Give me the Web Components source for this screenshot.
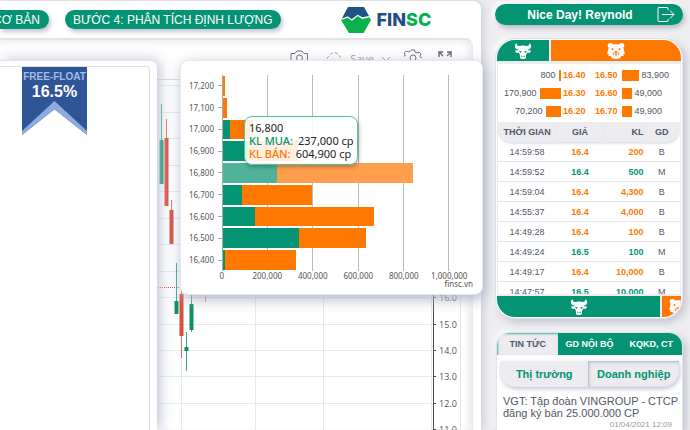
<!DOCTYPE html>
<html lang="vi">
<head>
<meta charset="utf-8">
<meta name="viewport" content="width=device-width, initial-scale=1">
<title>FINSC</title>
<style>
html, body { height: 100%; }
body {
  margin: 0; overflow: hidden; background: #eeeef0; color: #525866;
  font-family: "Liberation Sans", Arial, sans-serif; font-size: 10px;
  --green: #059473; --orange: #ff7800; --navy: #2f5597;
}
</style>
</head>
<body>
<fin-app></fin-app>
<script>
const define = (name, html, setup) => customElements.define(name, class extends HTMLElement {
  constructor() {
    super();
    const t = document.createElement('template');
    t.innerHTML = html;
    this.attachShadow({ mode: 'open' }).append(t.content.cloneNode(true));
  }
  connectedCallback() { if (setup) setup(this, this.shadowRoot); }
});

define('bull-icon', `
<style>:host{display:block;width:18px;height:16px}svg{display:block}</style>
<svg width="18" height="16" viewBox="0 0 36 32" fill="#fff" aria-hidden="true">
<path d="M5 0C1 3 0 9 5 12l5 2-8 1c0 4 4 6 8 4l2 6 0 5c2 3 10 3 12 0l0-5 2-6c4 2 8 0 8-4l-8-1 5-2c5-3 4-9 0-12 0 4-2 6-6 6-2 0-4-1-7-1s-5 1-7 1C7 6 5 4 5 0z"/>
<path d="M11 15l4 2-1 3-3-2zM25 15l-4 2 1 3 3-2zM14 26l2-1 1 3h-2zM22 26l-2-1-1 3h2z" fill="var(--green)"/>
</svg>`);

define('bear-icon', `
<style>:host{display:block;width:18px;height:16px;flex:none}svg{display:block}</style>
<svg width="18" height="16" viewBox="0 0 36 32" fill="#fff" aria-hidden="true">
<path d="M6 0c3 0 5 1 6 3 4-1 8-1 12 0 1-2 3-3 6-3 5 0 6 6 3 9l1 7 2 5-3 1 0 4-4 0-3 4c-5 3-11 3-16 0l-3-4-4 0 0-4-3-1 2-5 1-7C0 6 1 0 6 0z"/>
<path d="M13 24c-2-3 1-7 5-7s7 4 5 7M18 22v4" fill="none" stroke="var(--orange)" stroke-width="2"/>
<g fill="var(--orange)"><circle cx="11" cy="12" r="2"/><circle cx="25" cy="12" r="2"/><path d="M15 19h6l-2 4h-2z"/></g>
</svg>`);

define('step-pill', `
<style>
:host{display:flex;flex:none}
button{display:flex;align-items:center;border:0;border-radius:10px;background:var(--green);color:#fff;font:12px "Liberation Sans",Arial,sans-serif;
height:19px;padding:0 8px;white-space:nowrap;box-shadow:2px 3px 4px #c3c5d8}
:host([cut]) button{border-radius:0 10px 10px 0;width:49px;overflow:hidden;justify-content:flex-end;padding:0 9px 0 0}
</style><button type="button"><slot></slot></button>`);

define('fin-logo', `
<style>
:host{display:flex}
a{display:flex;align-items:center;gap:6px;text-decoration:none;font:800 18px Inter,sans-serif;color:#1f4e86}
b{font-weight:800;color:#00b050}
</style>
<a href="#"><svg width="30" height="26" viewBox="0 0 90 78" aria-hidden="true">
<path d="M21 0h48l15 27-20 4-14-8-18 14-12-9-18 7z" fill="#215387"/>
<path d="M0 39l20-7 13 9 17-14 14 9 21-5 5 8-22 39H24z" fill="#0bb24c"/></svg><span>FIN<b>SC</b></span></a>`);

define('fin-header', `
<style>
:host{display:flex;align-items:center;height:37px}
.steps{display:flex;gap:16px;flex:none}
fin-logo{margin-left:60px}
</style>
<nav class="steps"><step-pill cut>CƠ BẢN</step-pill><step-pill>BƯỚC 4: PHÂN TÍCH ĐỊNH LƯỢNG</step-pill></nav>
<fin-logo></fin-logo>`);

define('price-chart', `
<style>
:host{display:block;flex:1;min-height:0;margin-right:8px;position:relative;border-top:2px solid #dfe4e4;border-right:1px solid #ececf0;border-radius:0 8px 0 0;box-shadow:inset -4px 2px 6px #ececef;overflow:hidden}
svg{display:block;width:100%;height:100%}
.tools{position:absolute;top:9px;right:18px;display:flex;align-items:center;gap:14px;color:#666c7a}
.tools button{border:0;background:none;padding:0;color:inherit;display:flex;font:11px "Open Sans",sans-serif;align-items:center}
.tools button:first-child{margin-right:3px}
.tools svg{width:18px;height:18px;fill:none;stroke:currentColor}
.save{gap:7px;color:#9297a2!important}
.tools .chev{width:9px;height:8px}
</style>
<svg id="plot" aria-hidden="true"></svg>
<div class="tools">
<button type="button" aria-label="Camera"><svg viewBox="0 0 18 18"><path d="M1 15V4.500h4L7 2h5l2 2.500h3.500V15z"/><circle cx="9.500" cy="9" r="3"/></svg></button>
<button type="button" class="save"><svg viewBox="0 0 18 18" stroke-dasharray="3 2"><path d="M4 14a4 4 0 0 1 0-7 6 6 0 0 1 11 1 4 4 0 0 1 0 6z"/></svg>Save<svg class="chev" viewBox="0 0 9 8"><path d="M1 3l4 4 4-4"/></svg></button>
<button type="button" aria-label="Settings"><svg viewBox="0 0 18 18"><path d="M7.500 1h3l.5 2 2 1 2-1 2 2-1 2 .8 1.500 2 .5v2l-2 1-1 2 1 2-2 2-2-1-2 1-.5 2h-3l-.5-2-2-1-2 1-2-2 1-2-1-2-2-.5V8l2-1 .5-1-1-2 2-2 2 1 2-1z"/><circle cx="9" cy="9" r="3"/></svg></button>
<button type="button" aria-label="Fullscreen"><svg viewBox="0 0 18 18" stroke-width="1.500"><path d="M3 8V3h4M3 3l4 4M15 8V3h-4M15 3l-4 4M3 12v4h5M15 12v4h-5"/></svg></button>
</div>`, (el, root) => {
  const top = 40, parts = [];
  const line = (x1, y1, x2, y2, c, extra = '') => parts.push(`<line x1="${x1}" y1="${y1 - top}" x2="${x2}" y2="${y2 - top}" stroke="${c}" ${extra}/>`);
  line(0, 79.5, 460, 79.5, '#d8dade');
  [85.5, 112.5, 138.5, 165.5, 191.5, 218.5, 244.5, 271.5, 297.5, 324.5, 350.5, 376.5, 403.5].forEach(y => line(0, y, 431, y, '#dfebf3'));
  [181.5, 255.5, 323.5, 431.5].forEach(x => line(x, 80, x, 430, '#dfebf3'));
  line(0, 287.5, 433, 287.5, '#c8503f', 'stroke-dasharray="1 1"');
  line(433.5, 80, 433.5, 430, '#50484a');
  line(460.5, 80, 460.5, 430, '#e1e5ea');
  [16, 15, 14, 13, 12, 11].forEach((v, i) => {
    const y = [297.5, 324.5, 350.5, 376.5, 403.5, 429.5][i];
    line(433, y, 436, y, '#50484a');
    parts.push(`<text x="439" y="${y + 3.5 - top}" font-family="Open Sans, sans-serif" font-size="9" fill="#555">${v}.0</text>`);
  });
  [[161.5, 104, 184, 140, 184, 0], [166.5, 119, 206, 138, 206, 1], [171.5, 200, 244, 210, 244, 1], [176.5, 263, 314, 301, 314, 0], [181.5, 291, 358, 294, 336, 1],
   [186.5, 332, 371, 347, 351, 0], [191.5, 295, 332, 304, 330, 0], [205.5, 285, 302, 285, 290, 1]].forEach(([x, a, b, c, d, red]) => {
    const k = red ? '#d84f3e' : '#0b9069';
    line(x, a, x, b, k, 'opacity=".8"');
    parts.push(`<rect x="${x - 2}" y="${c - top}" width="4" height="${d - c}" fill="${k}"/>`);
  });
  root.getElementById('plot').innerHTML = parts.join('');
});

define('float-panel', `
<style>
:host{display:block;background:#fff;box-sizing:border-box;padding:5px 7px 0 0;border-top:1px solid #e4e5ec;border-radius:0 7px 0 0;box-shadow:3px 0 14px #bfc3d3}
.inner{height:100%;box-sizing:border-box;border:1px solid #dcdee4;border-width:1px 1px 0 0;border-radius:0 4px 0 0;padding-left:22px}
.ribbon{width:65px;height:68px;background:var(--navy);clip-path:polygon(0 0,100% 0,100% 100%,50% 62%,0 100%);text-align:center;color:#fff;display:grid}
.ribbon>*{grid-area:1/1}
.label{font-weight:bold;font-size:10px;line-height:12px;color:#a3bbe6;padding-top:4px}
.value{display:block;font:bold 16px/18px "Liberation Sans",sans-serif;color:#fff}
</style>
<div class="inner"><div class="ribbon">
<svg width="65" height="68" aria-hidden="true"><path d="M0 64L32.500 34 65 64v4h-4L32.500 42 4 68H0z" fill="#8faadc"/></svg>
<div class="label">FREE-FLOAT<span class="value">16.5%</span></div>
</div></div>`);

define('depth-chart', `
<style>
:host{display:block;box-sizing:border-box;background:#fff;border:1px solid #e6e8f0;border-radius:8px;box-shadow:2px 4px 14px #aeb4c6;padding:14px 33px 12px 7px;font:8px/10px "Noto Sans",sans-serif;color:#555}
.body{display:grid;grid-template-columns:29px 1fr;column-gap:5px}
.labels,.bars{display:grid;grid-template-rows:repeat(9,1fr);height:196px}
.labels span{display:flex;align-items:center;justify-content:flex-end;padding-right:3px}
.plot{position:relative;border-left:1px solid #aaa}
.grid{position:absolute;inset:0;display:grid;grid-template-columns:repeat(5,1fr)}
.grid i{border-right:1px solid #bbb}
.bars{position:relative}
.row{display:flex;padding:1px 0}
.row::before{content:"";width:4px;margin-left:-5px;margin-right:1px;align-self:center;border-top:1px solid #aaa}
.row i{background:var(--green)}.row i+i{background:var(--orange)}
.row.on i{background:#50b29a}.row.on i+i{background:#ff9f4d}
.axis{display:grid;grid-template-columns:repeat(6,1fr);margin:0 -23px 0 11px;line-height:9px}
.axis span{display:flex;justify-content:center}
.brand{text-align:right;margin-right:-24px;line-height:8px}
.tip{position:absolute;left:63px;top:55px;box-sizing:border-box;width:114px;border:1px solid #50c4a0;border-radius:8px;background:#ffffffe0;box-shadow:1px 2px 4px #0004;color:#222;font-size:11px;line-height:13px;padding:4px;white-space:nowrap}
.tip div{display:flex;gap:5px}.tip b{font-weight:500;color:var(--green)}.tip b.s{color:var(--orange)}
</style>
<div class="body"><div class="labels"></div><div class="plot"><div class="grid"><i></i><i></i><i></i><i></i><i></i></div><div class="bars"></div></div></div>
<div class="axis"><span>0</span><span>200,000</span><span>400,000</span><span>600,000</span><span>800,000</span><span>1,000,000</span></div>
<div class="brand">finsc.vn</div>
<div class="tip">16,800<div><b>KL MUA:</b>237,000 cp</div><div><b class="s">KL BÁN:</b>604,900 cp</div></div>`, (el, root) => {
  const data = [['17,200', 0, 9], ['17,100', 0, 18], ['17,000', 33, 98], ['16,900', 110, 220], ['16,800', 237, 604.9], ['16,700', 82, 312], ['16,600', 143, 524], ['16,500', 337, 295], ['16,400', 7, 317]];
  root.querySelector('.labels').innerHTML = data.map(d => `<span>${d[0]}</span>`).join('');
  root.querySelector('.bars').innerHTML = data.map(d => `<div class="row${d[0] === '16,800' ? ' on' : ''}"><i style="width:${d[1] / 10}%"></i><i style="width:${d[2] / 10}%"></i></div>`).join('');
});

define('user-bar', `
<style>
:host{display:flex;align-items:center;height:21px;border-radius:11px;background:var(--green);color:#fff;font-weight:bold;font-size:12px;box-shadow:2px 3px 5px #b9bccb,-2px -2px 4px #fff;padding:0 8px}
span{flex:1;text-align:center}
button{border:0;padding:0;background:none;display:flex}
</style><span><slot></slot></span>
<button type="button" aria-label="Đăng xuất"><svg width="18" height="15" viewBox="0 0 18 15" fill="none" stroke="#fff"><path d="M11 3V1.500q0-1-1-1H2q-1 0-1 1v12q0 1 1 1h8q1 0 1-1V12M5 7.500h12M13 3.500l4 4-4 4"/></svg></button>`);

define('ratio-bar', `
<style>
:host{display:grid;grid-template-columns:var(--split);gap:2px;height:21px;overflow:hidden}
div{display:flex;align-items:center;justify-content:center;background:var(--green);overflow:hidden}
div+div{background:var(--orange)}
:host([low]) div+div{justify-content:flex-start;padding-left:7px}
</style><div><bull-icon></bull-icon></div><div><bear-icon></bear-icon></div>`);

define('order-card', `
<style>
:host{display:flex;flex-direction:column;border:1px solid #e2e3ea;border-radius:20px;overflow:hidden;background:#ebebf0;padding:1px;box-shadow:3px 3px 8px #bfc2d0,-2px -2px 5px #fff,inset 0 0 0 1px #fff}
ratio-bar.top{border-radius:18px 18px 0 0;margin-bottom:3px}
ratio-bar.bottom{border-radius:0 0 18px 18px;margin-top:2px}
.depth{background:#fff;margin:0 1px;padding:2px 0;display:grid}
.lv{display:grid;grid-template-columns:1fr 25px 32px 1fr;height:18px;align-items:center}
.side{display:flex;align-items:center;gap:3px}.side.l{justify-content:flex-end}
.side i{height:11px;background:var(--orange)}
.side.r{padding-left:4px}
.lv b{color:var(--orange);text-align:right}
.scroll{height:172px;overflow:hidden;margin:0 1px;background:#fff}
table{width:100%;border-collapse:separate;border-spacing:0;table-layout:fixed}
th{background:#ebebf0;height:20px;padding:0;box-shadow:0 2px 2px #e2e3ea}
th:first-child{border-radius:0 0 0 14px;width:32%}th:nth-child(2){width:26%}th:nth-child(3){width:22%}th:last-child{border-radius:0 0 14px 0;width:20%}
td{height:19px;padding:0;border-bottom:1px solid #e6e7ec;text-align:center}
td:nth-child(3),th:nth-child(3){text-align:right}
td:nth-child(2),td:nth-child(3){font-weight:bold;color:var(--orange)}
.m td:nth-child(2),.m td:nth-child(3){color:var(--green)}
th,td,.lv{font-size:9px;line-height:12px}
</style>
<ratio-bar class="top" style="--split:53fr 131fr"></ratio-bar>
<div class="depth"></div>
<div class="scroll"><table><thead><tr><th>THỜI GIAN</th><th>GIÁ</th><th>KL</th><th>GD</th></tr></thead><tbody></tbody></table></div>
<ratio-bar low class="bottom" style="--split:165fr 19fr"></ratio-bar>`, (el, root) => {
  root.querySelector('.depth').innerHTML = [['800', 2, '16.40', '16.50', 17, '83,900'], ['170,900', 21, '16.30', '16.60', 10, '49,000'], ['70,200', 15, '16.20', '16.70', 10, '49,900']]
    .map(r => `<div class="lv"><div class="side l">${r[0]}<i style="width:${r[1]}px"></i></div><b>${r[2]}</b><b>${r[3]}</b><div class="side r"><i style="width:${r[4]}px"></i>${r[5]}</div></div>`).join('');
  root.querySelector('tbody').innerHTML = [['14:59:58', '16.4', '200', 'B'], ['14:59:52', '16.4', '500', 'M'], ['14:59:04', '16.4', '4,300', 'B'], ['14:55:37', '16.4', '4,000', 'B'], ['14:49:28', '16.4', '100', 'B'], ['14:49:24', '16.5', '100', 'M'], ['14:49:17', '16.4', '10,000', 'B'], ['14:47:57', '16.5', '10,000', 'M']]
    .map(r => `<tr class="${r[3] === 'M' ? 'm' : ''}">${r.map(c => `<td>${c}</td>`).join('')}</tr>`).join('');
});

define('news-card', `
<style>
:host{display:block;flex:1;min-height:0;background:#fff;border:1px solid #e2e3ea;border-bottom:0;border-radius:14px 14px 0 0;overflow:hidden;box-shadow:3px 3px 8px #bfc2d0,-2px -2px 5px #fff}
button{border:0;padding:0;font:inherit;font-weight:bold;background:none;color:inherit}
.tabs{display:grid;grid-template-columns:61fr 62fr 61fr;height:22px}
.tabs button{font-size:9px;background:var(--green);color:#fff;white-space:nowrap}
.tabs button.on{background:#ebebf0;color:#525866;box-shadow:inset 1px 1px 2px #059473aa}
.sub{display:grid;grid-template-columns:88fr 90fr;margin:6px 3px 0;height:26px;background:#ebebf0;border-radius:0 0 16px 16px;box-shadow:1px 2px 4px #c3c5d8;color:var(--green);overflow:hidden}
.sub button{font-size:11px;white-space:nowrap}
.sub button.on{box-shadow:inset 1px 1px 3px #aab0c0;border-radius:0 0 16px 0}
article{padding:8px 2px 0 6px}
a{display:block;color:#525866;text-decoration:none;font-size:11px;line-height:12px}
time{display:block;text-align:right;color:#999;font-size:8px;line-height:12px;padding-right:8px}
</style>
<div class="tabs"><button type="button" class="on">TIN TỨC</button><button type="button">GD NỘI BỘ</button><button type="button">KQKD, CT</button></div>
<div class="sub"><button type="button">Thị trường</button><button type="button" class="on">Doanh nghiệp</button></div>
<article><a href="#">VGT: Tập đoàn VINGROUP - CTCP đăng ký bán 25.000.000 CP</a><time>01/04/2021 12:09</time></article>`);

define('fin-app', `
<style>
:host{display:grid;grid-template-columns:1fr 188px;gap:14px;height:100vh;box-sizing:border-box;padding-right:7px}
main{display:flex;flex-direction:column;margin-top:1px;background:#fff;border-radius:0 8px 0 0;box-shadow:2px 0 8px #c9ccd8;min-width:0}
aside{display:flex;flex-direction:column;padding-top:4px;min-width:0;min-height:0}
order-card{margin:13px 0 13px}
news-card{margin:0 0 0 1px}
float-panel{position:absolute;left:0;top:60px;width:157px;bottom:0}
depth-chart{position:absolute;left:180px;top:60px;width:303px;height:235px}
</style>
<main><fin-header></fin-header><price-chart></price-chart></main>
<aside><user-bar>Nice Day! Reynold</user-bar><order-card></order-card><news-card></news-card></aside>
<float-panel></float-panel><depth-chart></depth-chart>`);
</script>
</body>
</html>
